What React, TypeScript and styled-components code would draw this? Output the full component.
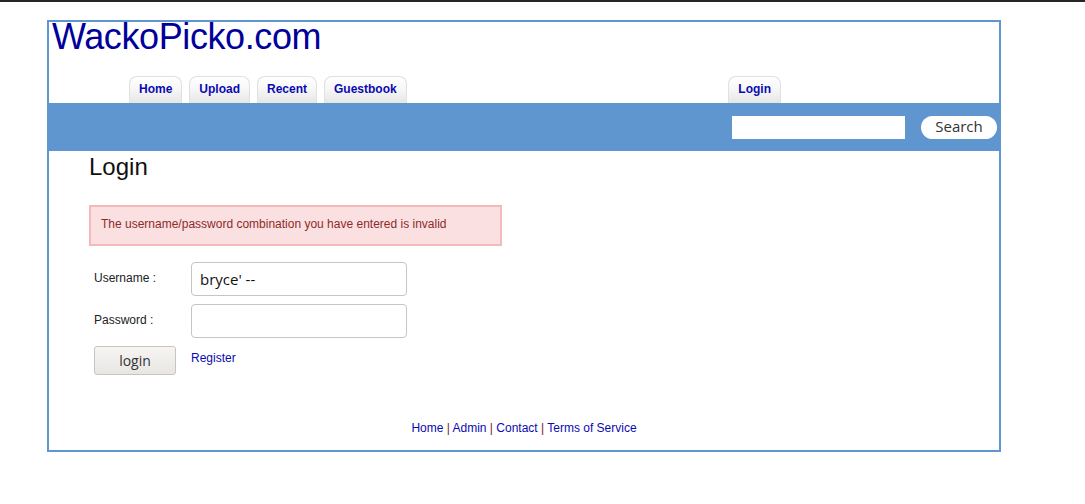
import React from "react";
import styled, { createGlobalStyle } from "styled-components";

const Global = createGlobalStyle`
  html, body { margin: 0; padding: 0; background: #fff; }
  body {
    border-top: 2px solid #262626;
    font-family: "Liberation Sans", Arial, sans-serif;
  }
`;

const BLUE = "#6096cf";
const LINK = "#0a0ab0";

const Page = styled.div`
  width: 950px;
  margin: 18px 0 0 47px;
  border: 2px solid ${BLUE};
  display: flex;
  flex-direction: column;
`;

const Header = styled.header`
  display: flex;
  flex-direction: column;
`;

const Title = styled.h1`
  margin: 0;
  padding-left: 3px;
  font-family: "Liberation Sans", Arial, sans-serif;
  font-weight: normal;
  font-size: 36px;
  line-height: 30px;
  letter-spacing: -0.4px;
  color: #00009a;
`;

const TabRow = styled.nav`
  display: flex;
  align-items: flex-end;
  margin-top: 24px;
  padding-left: 80px;
  padding-right: 218px;
`;

const TabGroup = styled.div`
  display: flex;
  gap: 7px;
  margin-left: ${(p: { $right?: boolean }) => (p.$right ? "auto" : "0")};
`;

const Tab = styled.a`
  display: flex;
  align-items: center;
  height: 23px;
  padding: 0 9px 3px;
  border: 1px solid #e0e0e0;
  border-bottom: none;
  border-radius: 8px 8px 0 0;
  background: linear-gradient(#ffffff 0%, #f7f7f7 45%, #e6e6e6 100%);
  font-size: 12px;
  font-weight: bold;
  color: ${LINK};
  text-decoration: none;
`;

const Bar = styled.div`
  height: 48px;
  background: ${BLUE};
  display: flex;
  align-items: center;
  justify-content: flex-end;
  gap: 16px;
  padding-right: 2px;
`;

const SearchInput = styled.input`
  width: 173px;
  height: 23px;
  box-sizing: border-box;
  border: none;
  background: #fff;
  margin: 0;
  padding: 0 4px;
`;

const SearchButton = styled.button`
  width: 76px;
  height: 23px;
  border: none;
  border-radius: 12px;
  background: #fff;
  font-family: "Open Sans", sans-serif;
  font-size: 15px;
  color: #333;
  padding: 0 0 2px;
  line-height: 20px;
`;

const Content = styled.main`
  display: flex;
  flex-direction: column;
  padding: 2px 40px 15px 40px;
`;

const Heading = styled.h2`
  margin: 0;
  font-size: 24px;
  line-height: 28px;
  font-weight: normal;
  color: #111;
`;

const ErrorBox = styled.div`
  margin-top: 24px;
  width: 399px;
  border: 2px solid #f5b9ba;
  background: #fae0e1;
  color: #8e2a2a;
  font-size: 12px;
  line-height: 14px;
  padding: 10px 0 13px 10px;
`;

const Form = styled.form`
  margin-top: 16px;
  padding-left: 5px;
  display: flex;
  flex-direction: column;
  gap: 8px;
`;

const Row = styled.div`
  display: flex;
  align-items: ${(p: { $top?: boolean }) => (p.$top ? "flex-start" : "center")};
`;

const Label = styled.label`
  width: 97px;
  font-size: 12px;
  color: #222;
  margin-top: -2px;
`;

const TextInput = styled.input`
  width: 216px;
  height: 34px;
  box-sizing: border-box;
  border: 1px solid #c8c4c0;
  border-radius: 4px;
  padding: 0 8px;
  font-family: "Open Sans", sans-serif;
  font-size: 15px;
  color: #111;
  background: #fff;
  margin: 0;
`;

const LoginButton = styled.button`
  width: 82px;
  height: 29px;
  box-sizing: border-box;
  border: 1px solid #c8c4c0;
  border-radius: 3px;
  background: linear-gradient(#f6f5f4, #e8e6e3);
  font-family: "Open Sans", sans-serif;
  font-size: 14px;
  color: #333;
  padding: 0;
  margin: 0 15px 0 0;
`;

const Link = styled.a`
  font-size: 12px;
  color: ${LINK};
  text-decoration: none;
`;

const RegisterLink = styled(Link)`
  margin-top: 5px;
`;

const Footer = styled.footer`
  margin-top: 46px;
  text-align: center;
  font-size: 12px;
  line-height: 14px;
  color: #7a2030;
  white-space: pre;
`;

export default function App() {
  const footerLinks = ["Home", "Admin", "Contact", "Terms of Service"];
  return (
    <>
      <Global />
      <Page>
        <Header>
          <Title>WackoPicko.com</Title>
          <TabRow>
            <TabGroup>
              <Tab href="#">Home</Tab>
              <Tab href="#">Upload</Tab>
              <Tab href="#">Recent</Tab>
              <Tab href="#">Guestbook</Tab>
            </TabGroup>
            <TabGroup $right>
              <Tab href="#">Login</Tab>
            </TabGroup>
          </TabRow>
          <Bar>
            <SearchInput type="text" />
            <SearchButton type="button">Search</SearchButton>
          </Bar>
        </Header>
        <Content>
          <Heading>Login</Heading>
          <ErrorBox>The username/password combination you have entered is invalid</ErrorBox>
          <Form onSubmit={(e) => e.preventDefault()}>
            <Row>
              <Label>Username :</Label>
              <TextInput type="text" defaultValue="bryce' --" />
            </Row>
            <Row>
              <Label>Password :</Label>
              <TextInput type="password" />
            </Row>
            <Row $top>
              <LoginButton type="submit">login</LoginButton>
              <RegisterLink href="#">Register</RegisterLink>
            </Row>
          </Form>
          <Footer>
            {footerLinks.map((l, i) => (
              <React.Fragment key={l}>
                {i > 0 && " | "}
                <Link href="#">{l}</Link>
              </React.Fragment>
            ))}
          </Footer>
        </Content>
      </Page>
    </>
  );
}
